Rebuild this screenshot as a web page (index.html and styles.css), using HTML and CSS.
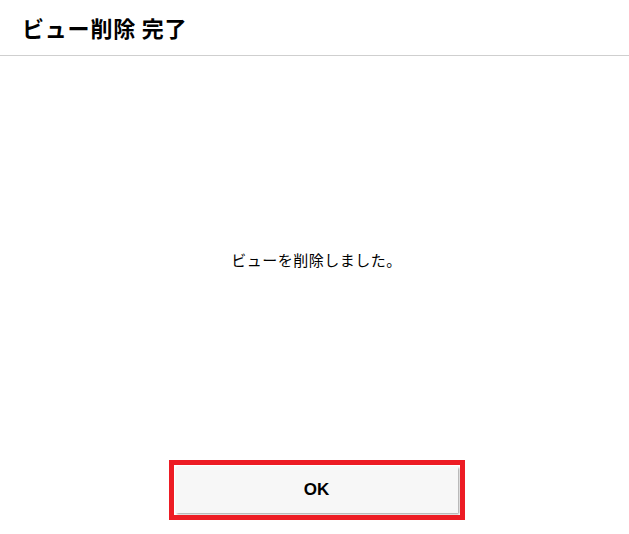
FILE: index.html
```html
<!DOCTYPE html>
<html lang="ja">
<head>
    <meta charset="UTF-8">
    <meta name="viewport" content="width=device-width, initial-scale=1.0">
    <title>ビュー削除 完了</title>
    <link rel="stylesheet" href="styles.css">
</head>
<body>
    <!-- Header -->
    <header class="dialog-header">
        <h1>ビュー削除 完了</h1>
    </header>
    <!-- Message -->
    <main class="dialog-body">
        <p class="message">ビューを削除しました。</p>
    </main>
    <!-- Footer Button -->
    <footer class="dialog-footer">
        <button type="button" class="btn-ok">OK</button>
    </footer>
</body>
</html>
```

FILE: styles.css
```css
/* General styling */
* {
    margin: 0;
    padding: 0;
    box-sizing: border-box;
}
body {
    font-family: "Noto Sans CJK JP", "Noto Sans", sans-serif;
    color: #000;
    background-color: #fff;
    height: 100vh;
    display: flex;
    flex-direction: column;
}

/* Header */
.dialog-header {
    height: 56px;
    display: flex;
    align-items: center;
    padding: 0 22px 1px;
    border-bottom: 1px solid #cfcfcf;
}
.dialog-header h1 {
    font-size: 22px;
    font-weight: 700;
    letter-spacing: 0.8px;
}

/* Message */
.dialog-body {
    flex: 1;
    display: flex;
    align-items: center;
    justify-content: center;
    padding: 0 0 4px 4px;
}
.message {
    font-size: 15px;
    letter-spacing: 0.5px;
}

/* OK Button */
.dialog-footer {
    display: flex;
    justify-content: center;
    padding: 0 0 21px 4px;
}
.btn-ok {
    width: 282px;
    height: 46px;
    font-family: "Liberation Sans", Arial, sans-serif;
    font-size: 17px;
    font-weight: 700;
    color: #000;
    background-color: #f7f7f7;
    border: none;
    box-shadow: 1px 1px 2px #9a9a9a;
    outline: 5px solid #ed1c24;
    outline-offset: 2px;
    cursor: pointer;
}
```
